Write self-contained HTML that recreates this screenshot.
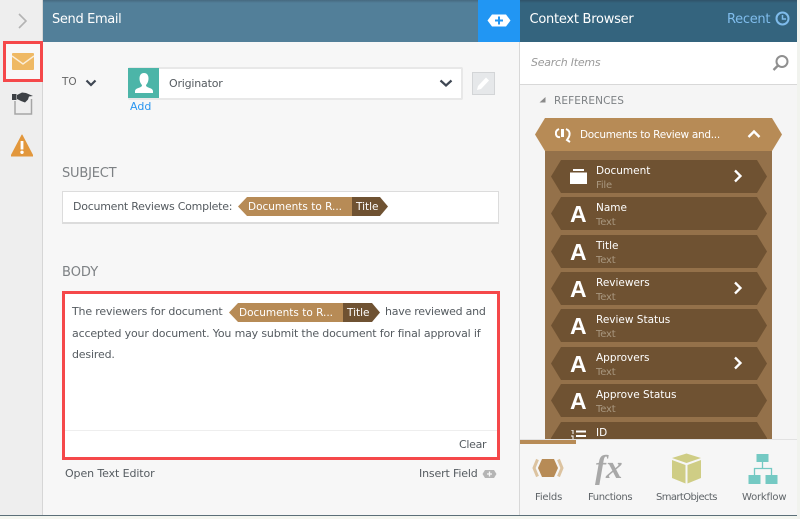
<!DOCTYPE html>
<html><head><meta charset="utf-8">
<style>
html,body{margin:0;padding:0}
body{width:800px;height:519px;overflow:hidden;position:relative;background:#f4f6f0;font-family:"DejaVu Sans","Liberation Sans",sans-serif;color:#555b60}
.a{position:absolute;white-space:nowrap}
.t{font-size:11px;line-height:14px;letter-spacing:-.17px}
.lbl{font-size:13px;color:#7d8184;line-height:16px;letter-spacing:-.2px}
.row{position:absolute;left:551px;width:216px;height:33px;background:#6f5232;clip-path:polygon(0 50%,10px 0,206px 0,216px 50%,206px 100%,10px 100%)}
.row b{position:absolute;left:19px;top:4px;font:bold 23px/26px "Liberation Sans",sans-serif;color:#fff}
.row .n{position:absolute;left:45px;top:4px;font-size:10.5px;line-height:14px;color:#fff;white-space:nowrap}
.row .s{position:absolute;left:45px;top:19px;font-size:10px;line-height:13px;color:#a8977f;white-space:nowrap;letter-spacing:-.2px}
.row svg{position:absolute;left:182px;top:9px}
.tk{position:absolute;height:19px;font-size:10.5px;line-height:20px;color:#fff;white-space:nowrap}
.bl{position:absolute;top:491px;font-size:10px;line-height:13px;color:#5f6468;white-space:nowrap;letter-spacing:-.2px}
</style></head><body>
<!-- left rail -->
<div class="a" style="left:0;top:0;width:43px;height:515px;background:#eeeeee;border-right:1px solid #d6d6d6;box-sizing:border-box"></div>
<svg class="a" style="left:17px;top:12px" width="12" height="18"><path d="M2 2l7 7-7 7" fill="none" stroke="#b3b3b3" stroke-width="1.6"/></svg>
<div class="a" style="left:3px;top:41px;width:40px;height:41px;box-sizing:border-box;border:3px solid #f5484a;background:#f8f8f8"></div>
<svg class="a" style="left:12px;top:53px" width="22" height="17"><rect width="22" height="17" rx="1" fill="#efb964"/><path d="M0 3l11 8 11-8" fill="none" stroke="#fbeed8" stroke-width="1.4"/></svg>
<svg class="a" style="left:11px;top:91px" width="24" height="24"><path d="M4 10v13h16.500V8" fill="none" stroke="#a5a5a5" stroke-width="1.500"/><rect x="1" y="3" width="4.500" height="6" fill="#3d4145"/><path d="M6 4l5-2.500 4 .5 7 3-4 .5-1 3-3 3-4-1.500L6 8z" fill="#3d4145"/></svg>
<svg class="a" style="left:11px;top:134px" width="22" height="23"><path d="M11 1L22 22H0z" fill="#e2973c" stroke="#e2973c" stroke-linejoin="round"/><rect x="9.6" y="7" width="2.8" height="8.5" fill="#fff"/><circle cx="11" cy="18.3" r="1.7" fill="#fff"/></svg>

<!-- header -->
<div class="a" style="left:43px;top:0;width:435px;height:42px;background:linear-gradient(#46697f 0,#527f99 3px,#527f99 100%)"></div>
<div class="a" style="left:52px;top:11px;font-size:13px;line-height:18px;color:#fff;letter-spacing:-.35px">Send Email</div>
<div class="a" style="left:478px;top:0;width:42px;height:42px;background:#2196f3"></div>
<svg class="a" style="left:487px;top:14px" width="24" height="13"><path d="M5 .5H19L23.5 6.5 19 12.5H5L.5 6.5z" fill="#fff"/><path d="M12 2.500v8M8 6.500h8" stroke="#2196f3" stroke-width="2"/></svg>
<div class="a" style="left:520px;top:0;width:277px;height:42px;background:linear-gradient(#2f5268 0,#34647e 3px,#34647e 100%)"></div>
<div class="a" style="left:529.500px;top:11px;font-size:13px;line-height:18px;color:#fff;letter-spacing:-.25px">Context Browser</div>
<div class="a" style="left:727px;top:11px;font-size:13px;line-height:18px;color:#7fbcec;letter-spacing:-.3px">Recent</div>
<svg class="a" style="left:775px;top:11px" width="15" height="15"><circle cx="7.500" cy="7.500" r="6" fill="none" stroke="#7fbcec" stroke-width="2"/><path d="M7.500 4v4H11" fill="none" stroke="#7fbcec" stroke-width="1.500"/></svg>

<!-- main -->
<div class="a" style="left:43px;top:42px;width:477px;height:473px;background:#f7f7f7;border-right:1px solid #d8d8d8;box-sizing:border-box"></div>
<div class="a" style="left:62px;top:75px;font-size:10.500px;line-height:14px;color:#666">TO</div>
<svg class="a" style="left:85px;top:79px" width="12" height="9"><path d="M1.500 1.500L6 6l4.500-4.500" fill="none" stroke="#3f4753" stroke-width="2.200"/></svg>
<div class="a" style="left:128px;top:67px;width:335px;height:33px;background:#fff;border:1px solid #e8e8e8;border-width:2px 2px 2px 0;box-sizing:border-box;border-radius:2px"></div>
<div class="a" style="left:128px;top:68px;width:31px;height:30px;background:#4cb5a8"></div>
<svg class="a" style="left:134px;top:72px" width="20" height="22"><path d="M10 1c3 0 4.500 2.300 4.500 5.500S13 12 12 13c0 1.500 1 2 3 2.700 2.500.9 4 1.500 4 3.800v1.500H1v-1.500c0-2.300 1.500-2.900 4-3.800 2-.7 3-1.200 3-2.700-1-1-2.500-3.300-2.500-6.500S7 1 10 1z" fill="#fff"/></svg>
<div class="a" style="left:169px;top:76px;font-size:11px;line-height:15px;color:#555b60;letter-spacing:-.2px">Originator</div>
<svg class="a" style="left:439px;top:79px" width="14" height="9"><path d="M1.500 1.500L7 6.500l5.500-5" fill="none" stroke="#3f4753" stroke-width="2.200"/></svg>
<div class="a" style="left:472px;top:72px;width:23px;height:23px;box-sizing:border-box;background:#e6e8ea;border:1px solid #d3d5d7"></div>
<svg class="a" style="left:476px;top:76px" width="15" height="15"><path d="M1 14l1-4 8-8.500 3 3L5 13z" fill="#fff"/></svg>
<div class="a" style="left:130px;top:100px;font-size:11px;line-height:14px;color:#2b96f0">Add</div>

<div class="a lbl" style="left:62px;top:166px">SUBJECT</div>
<div class="a" style="left:62px;top:191px;width:437px;height:33px;box-sizing:border-box;background:#fff;border:1px solid #dcdcdc;border-bottom-width:2px"></div>
<div class="a t" style="left:73px;top:200px;letter-spacing:-.25px">Document Reviews Complete:</div>
<div class="tk" style="left:238px;top:197px;width:114px;background:#b78b56;clip-path:polygon(0 50%,9px 0,100% 0,100% 100%,9px 100%);padding-left:10px;box-sizing:border-box">Documents to R...</div>
<div class="tk" style="left:352px;top:197px;width:36px;background:#6f5232;clip-path:polygon(0 0,28px 0,100% 50%,28px 100%,0 100%);padding-left:4px;box-sizing:border-box">Title</div>

<div class="a lbl" style="left:62px;top:265px;letter-spacing:0">BODY</div>
<div class="a" style="left:62px;top:291px;width:438px;height:169px;box-sizing:border-box;background:#fff;border:3px solid #f5484a"></div>
<div class="a" style="left:65px;top:430px;width:432px;height:1px;background:#eeeeee"></div>
<div class="a t" style="left:72px;top:305px">The reviewers for document</div>
<div class="tk" style="left:229px;top:303px;width:114px;background:#b78b56;clip-path:polygon(0 50%,9px 0,100% 0,100% 100%,9px 100%);padding-left:10px;box-sizing:border-box">Documents to R...</div>
<div class="tk" style="left:343px;top:303px;width:37px;background:#6f5232;clip-path:polygon(0 0,29px 0,100% 50%,29px 100%,0 100%);padding-left:4px;box-sizing:border-box">Title</div>
<div class="a t" style="left:385px;top:305px;letter-spacing:-.25px">have reviewed and</div>
<div class="a t" style="left:72px;top:327px">accepted your document. You may submit the document for final approval if</div>
<div class="a t" style="left:72px;top:348px">desired.</div>
<div class="a t" style="left:459px;top:438px;letter-spacing:-.3px">Clear</div>
<div class="a t" style="left:65px;top:467px;letter-spacing:-.1px">Open Text Editor</div>
<div class="a t" style="left:419px;top:467px;letter-spacing:-.15px">Insert Field</div>
<svg class="a" style="left:482px;top:469px" width="15" height="10"><path d="M3 1H12L14.500 5 12 9H3L.5 5z" fill="#b5b5b5"/><path d="M7.500 2.500v5M5 5h5" stroke="#f7f7f7" stroke-width="1.300"/></svg>

<!-- context browser -->
<div class="a" style="left:520px;top:42px;width:277px;height:43px;background:#fff;border-bottom:1px solid #d8d8d8;box-sizing:border-box"></div>
<div class="a" style="left:531px;top:56px;font:italic 11px/14px 'DejaVu Sans',sans-serif;color:#9a9a9a;letter-spacing:-.25px">Search Items</div>
<svg class="a" style="left:772px;top:54px" width="18" height="18"><circle cx="10" cy="7.500" r="5.500" fill="none" stroke="#8f8f8f" stroke-width="2"/><path d="M6 11.500L1.500 16" stroke="#8f8f8f" stroke-width="2.300"/></svg>
<div class="a" style="left:520px;top:85px;width:277px;height:354px;background:#f5f5f5"></div>
<div class="a" style="left:797px;top:0;width:3px;height:519px;background:#f1f3ee"></div>
<svg class="a" style="left:539px;top:96px" width="7" height="7"><path d="M6.500 1v5.500H.5z" fill="#8a8a8a"/></svg>
<div class="a" style="left:554px;top:94px;font-size:10.500px;line-height:14px;color:#7d8184;letter-spacing:.1px">REFERENCES</div>
<div class="a" style="left:545px;top:150px;width:227px;height:289px;background:#94714a"></div>
<div class="a" style="left:535px;top:118px;width:247px;height:33px;background:#b78b56;clip-path:polygon(0 50%,10px 0,237px 0,100% 50%,237px 100%,10px 100%)"></div>
<svg class="a" style="left:555px;top:127px" width="17" height="17"><path d="M4 2C1.500 3 .5 5 1 7.500 1.500 9.500 3 10.500 5 10" fill="none" stroke="#fff" stroke-width="2"/><path d="M6 2h3v8H6z" fill="#fff"/><path d="M11 2c2.500 1 4 3 3.500 6-.3 2-1.500 3.500-2.500 5l3 2" fill="none" stroke="#fff" stroke-width="2"/></svg>
<div class="a" style="left:580px;top:128px;font-size:10.500px;line-height:14px;color:#fff;letter-spacing:-.3px">Documents to Review and...</div>
<svg class="a" style="left:747px;top:129px" width="14" height="10"><path d="M1.500 8L7 2.500 12.500 8" fill="none" stroke="#fff" stroke-width="2.400"/></svg>

<div class="row" style="top:160px"><svg style="left:19px;top:9px" width="17" height="15"><path d="M3 0h11v2H3zM0 3.500h17V15H0z" fill="#fff"/></svg><span class="n">Document</span><span class="s">File</span><svg width="10" height="14"><path d="M2 1.500L7.500 7 2 12.500" fill="none" stroke="#fff" stroke-width="2.300"/></svg></div>
<div class="row" style="top:197px"><b>A</b><span class="n">Name</span><span class="s">Text</span></div>
<div class="row" style="top:235px"><b>A</b><span class="n">Title</span><span class="s">Text</span></div>
<div class="row" style="top:272px"><b>A</b><span class="n">Reviewers</span><span class="s">Text</span><svg width="10" height="14"><path d="M2 1.500L7.500 7 2 12.500" fill="none" stroke="#fff" stroke-width="2.300"/></svg></div>
<div class="row" style="top:309px"><b>A</b><span class="n">Review Status</span><span class="s">Text</span></div>
<div class="row" style="top:347px"><b>A</b><span class="n">Approvers</span><span class="s">Text</span><svg width="10" height="14"><path d="M2 1.500L7.500 7 2 12.500" fill="none" stroke="#fff" stroke-width="2.300"/></svg></div>
<div class="row" style="top:384px"><b>A</b><span class="n">Approve Status</span><span class="s">Text</span></div>
<div class="row" style="top:422px;height:17px;clip-path:polygon(0 16px,10px 0,206px 0,216px 16px,216px 17px,0 17px)"><svg style="left:19px;top:8px" width="16" height="9"><path d="M6 1.500h10M6 6h10" stroke="#fff" stroke-width="2"/><path d="M1 0h2v4M1 6h2v3" stroke="#fff" stroke-width="1" fill="none"/></svg><span class="n">ID</span></div>

<!-- bottom tabs -->
<div class="a" style="left:520px;top:439px;width:277px;height:76px;background:#f6f6f6;border-top:1px solid #e2e2e2;box-sizing:border-box"></div>
<div class="a" style="left:520px;top:440px;width:56px;height:4px;background:#b78b56"></div>
<svg class="a" style="left:532px;top:458px" width="32" height="20"><path d="M5.500 1.500L2 10l3.500 8.500M26.500 1.500L30 10l-3.500 8.500" fill="none" stroke="#dcc3a0" stroke-width="3"/><path d="M10 1h12l4 9-4 9H10L6 10z" fill="#b78b56"/></svg>
<div class="a" style="left:595px;top:450px;font:italic bold 33px/36px 'Liberation Serif',serif;color:#a8a8a8">fx</div>
<svg class="a" style="left:671px;top:453px" width="31" height="31"><path d="M15.500 0.500L30 5 15.500 10 1 5z" fill="#cfcd85"/><path d="M1 7l13.500 5v18.500L1 25zM30 7l-13.500 5v18.500L30 25z" fill="#cfcd85"/></svg>
<svg class="a" style="left:748px;top:453px" width="30" height="31"><rect x="8.500" y="1" width="12" height="8" fill="#74c9c3"/><rect x="0.500" y="22" width="12" height="9" fill="#74c9c3"/><rect x="17.500" y="22" width="12" height="9" fill="#74c9c3"/><path d="M14.500 9v6.500M6.500 22v-6.500h17V22" fill="none" stroke="#74c9c3" stroke-width="1.300"/></svg>
<div class="bl" style="left:535px">Fields</div>
<div class="bl" style="left:588px;letter-spacing:-.4px">Functions</div>
<div class="bl" style="left:656px;letter-spacing:-.6px">SmartObjects</div>
<div class="bl" style="left:742px">Workflow</div>
<div class="a" style="left:0;top:515px;width:797px;height:1px;background:#5b6f78"></div>
</body></html>
